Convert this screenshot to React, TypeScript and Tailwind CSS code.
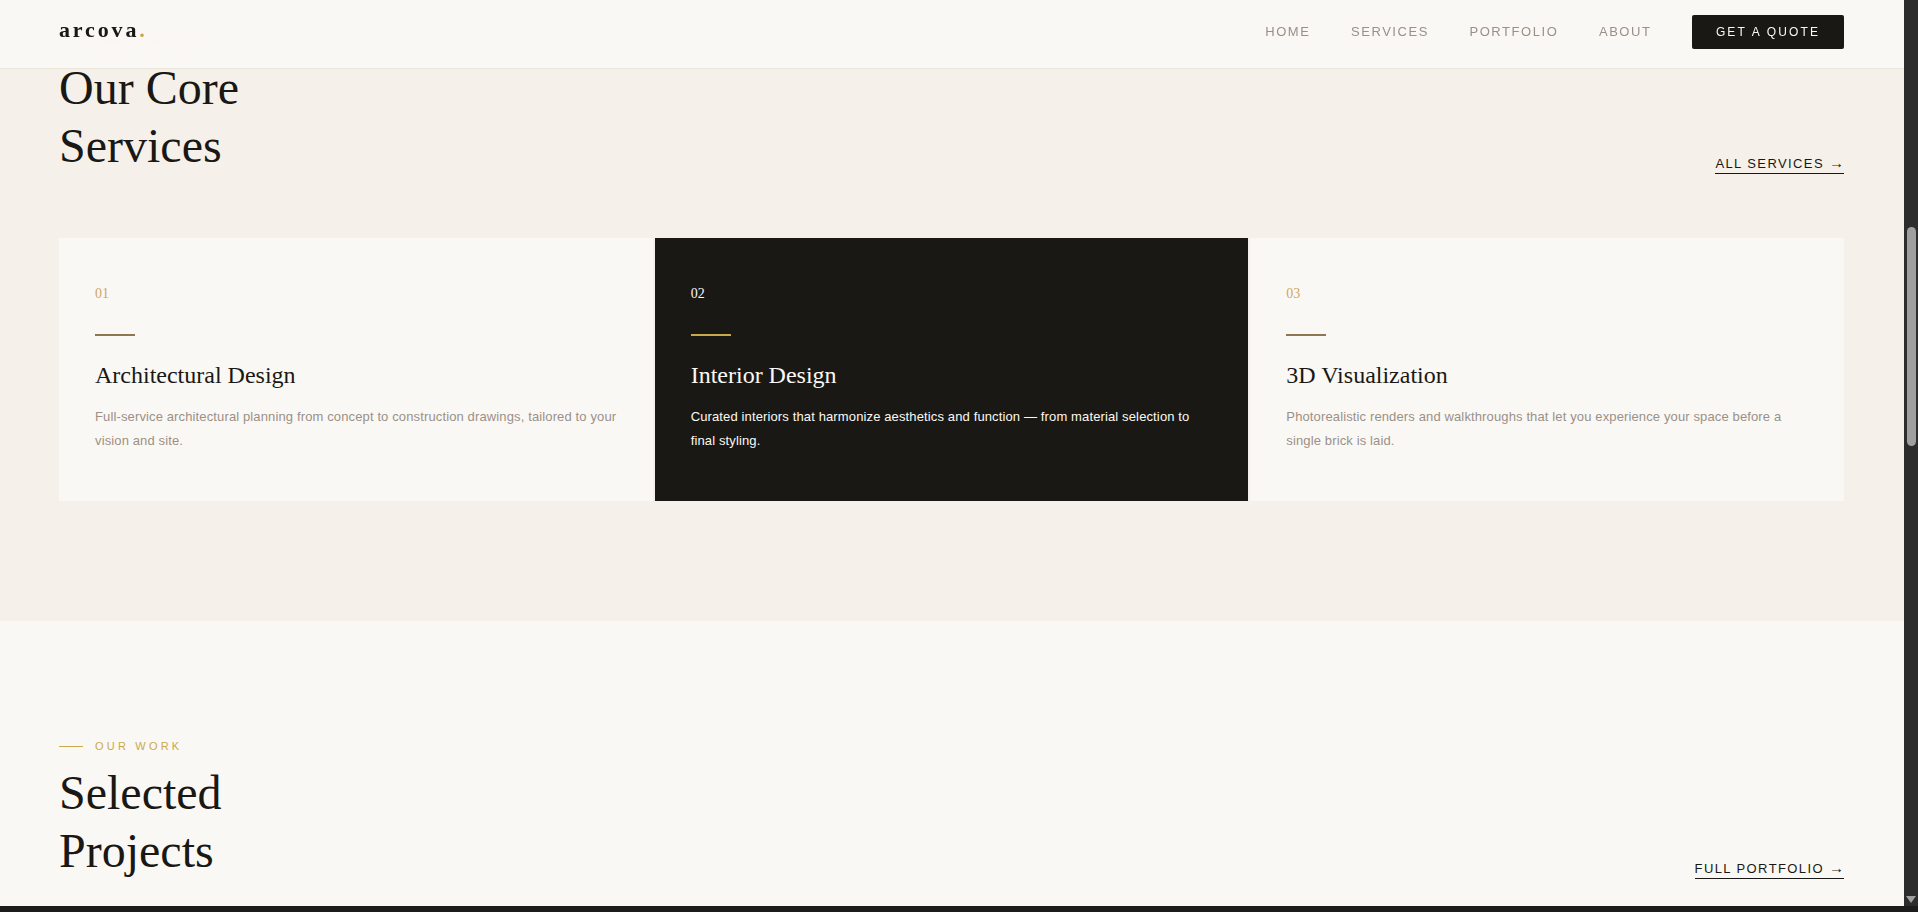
const services = [
  {
    num: '01',
    title: 'Architectural Design',
    text: 'Full-service architectural planning from concept to construction drawings, tailored to your vision and site.',
  },
  {
    num: '02',
    title: 'Interior Design',
    text: 'Curated interiors that harmonize aesthetics and function — from material selection to final styling.',
    dark: true,
  },
  {
    num: '03',
    title: '3D Visualization',
    text: 'Photorealistic renders and walkthroughs that let you experience your space before a single brick is laid.',
  },
]

const links = ['Home', 'Services', 'Portfolio', 'About']

function Eyebrow({ label }: { label: string }) {
  return (
    <div className="mb-[11px] flex h-[14px] items-center gap-3">
      <span className="h-px w-6 bg-[#c9a84c]" />
      <span className="text-[11px] uppercase leading-[14px] tracking-[3.2px] text-[#c9a84c]">{label}</span>
    </div>
  )
}

function SectionHead({ eyebrow, lines, link }: { eyebrow: string; lines: string[]; link: string }) {
  return (
    <div className="flex items-end justify-between">
      <div>
        <Eyebrow label={eyebrow} />
        <h2 className="font-['Liberation_Serif',serif] text-[48px] font-normal leading-[1.2] text-[#1a1814]">
          {lines.map((line) => (
            <span key={line} className="block">
              {line}
            </span>
          ))}
        </h2>
      </div>
      <a className="border-b border-[#1a1814] pb-px text-[13px] uppercase leading-[16px] tracking-[1.4px] text-[#1a1814]">
        {link} <span className="text-[15px] leading-none tracking-normal">→</span>
      </a>
    </div>
  )
}

function ServiceCard({ num, title, text, dark }: { num: string; title: string; text: string; dark?: boolean }) {
  return (
    <article className={`h-[263px] px-9 pt-[48px] ${dark ? 'bg-[#1a1814]' : 'bg-[#faf8f4]'}`}>
      <p className={`font-['Liberation_Serif',serif] text-[14px] leading-4 ${dark ? 'text-[#faf8f4]' : 'text-[#cfa662]'}`}>
        {num}
      </p>
      <div className={`mt-[32px] h-0.5 w-10 ${dark ? 'bg-[#c9a84c]' : 'bg-[#8f7650]'}`} />
      <h3 className={`mt-[24px] font-['Liberation_Serif',serif] text-2xl font-normal leading-[30px] ${dark ? 'text-[#faf8f4]' : 'text-[#1a1814]'}`}>
        {title}
      </h3>
      <p className={`mt-[15px] text-[13px] leading-[23.4px] tracking-[0.13px] ${dark ? 'text-[#faf8f4]' : 'text-[#9a9088]'}`}>{text}</p>
    </article>
  )
}

function Scrollbar() {
  return (
    <div className="relative w-[14px] shrink-0 bg-[#2c2c2c]">
      <div className="absolute left-[3px] top-[227px] h-[219px] w-[9px] rounded-full bg-[#9f9f9f]" />
      <div className="absolute bottom-[3px] left-[2px] h-0 w-0 border-x-[5px] border-t-[7px] border-x-transparent border-t-[#9f9f9f]" />
    </div>
  )
}

export default function App() {
  return (
    <div className="flex h-[912px] w-[1918px] flex-col overflow-hidden bg-[#1c1c1c] font-['Liberation_Sans',sans-serif]">
      <div className="flex h-[906px] shrink-0">
        <main className="relative min-w-0 flex-1 overflow-hidden bg-[#faf8f4]">
          <header className="absolute inset-x-0 top-0 z-10 flex h-[69px] items-start justify-between border-b border-[#ebe6dc] bg-[#faf8f4]/95 pl-[59px] pr-[60px] pt-[15px] backdrop-blur">
            <span className="mt-1 font-['Liberation_Serif',serif] text-[22px] font-bold leading-none tracking-[0.13em] text-[#1a1814]">
              arcova<span className="text-[#c9a84c]">.</span>
            </span>
            <nav className="flex items-center gap-[40.5px]">
              {links.map((link) => (
                <a key={link} className="text-[13px] uppercase tracking-[0.12em] text-[#9a9088]">
                  {link}
                </a>
              ))}
              <a className="flex h-[34px] w-[152px] items-center justify-center rounded-[2px] bg-[#1a1814] text-[12px] uppercase tracking-[0.18em] text-[#faf8f4]">
                Get a Quote
              </a>
            </nav>
          </header>

          <section className="bg-[#f5f1ea] pb-[120px] pl-[59px] pr-[60px] pt-[34px]">
            <SectionHead eyebrow="What We Do" lines={['Our Core', 'Services']} link="All Services" />
            <div className="mt-[64px] grid grid-cols-3 gap-0.5">
              {services.map((service) => (
                <ServiceCard key={service.num} {...service} />
              ))}
            </div>
          </section>

          <section className="pl-[59px] pr-[60px] pt-[118px]">
            <SectionHead eyebrow="Our Work" lines={['Selected', 'Projects']} link="Full Portfolio" />
          </section>
        </main>
        <Scrollbar />
      </div>
    </div>
  )
}
